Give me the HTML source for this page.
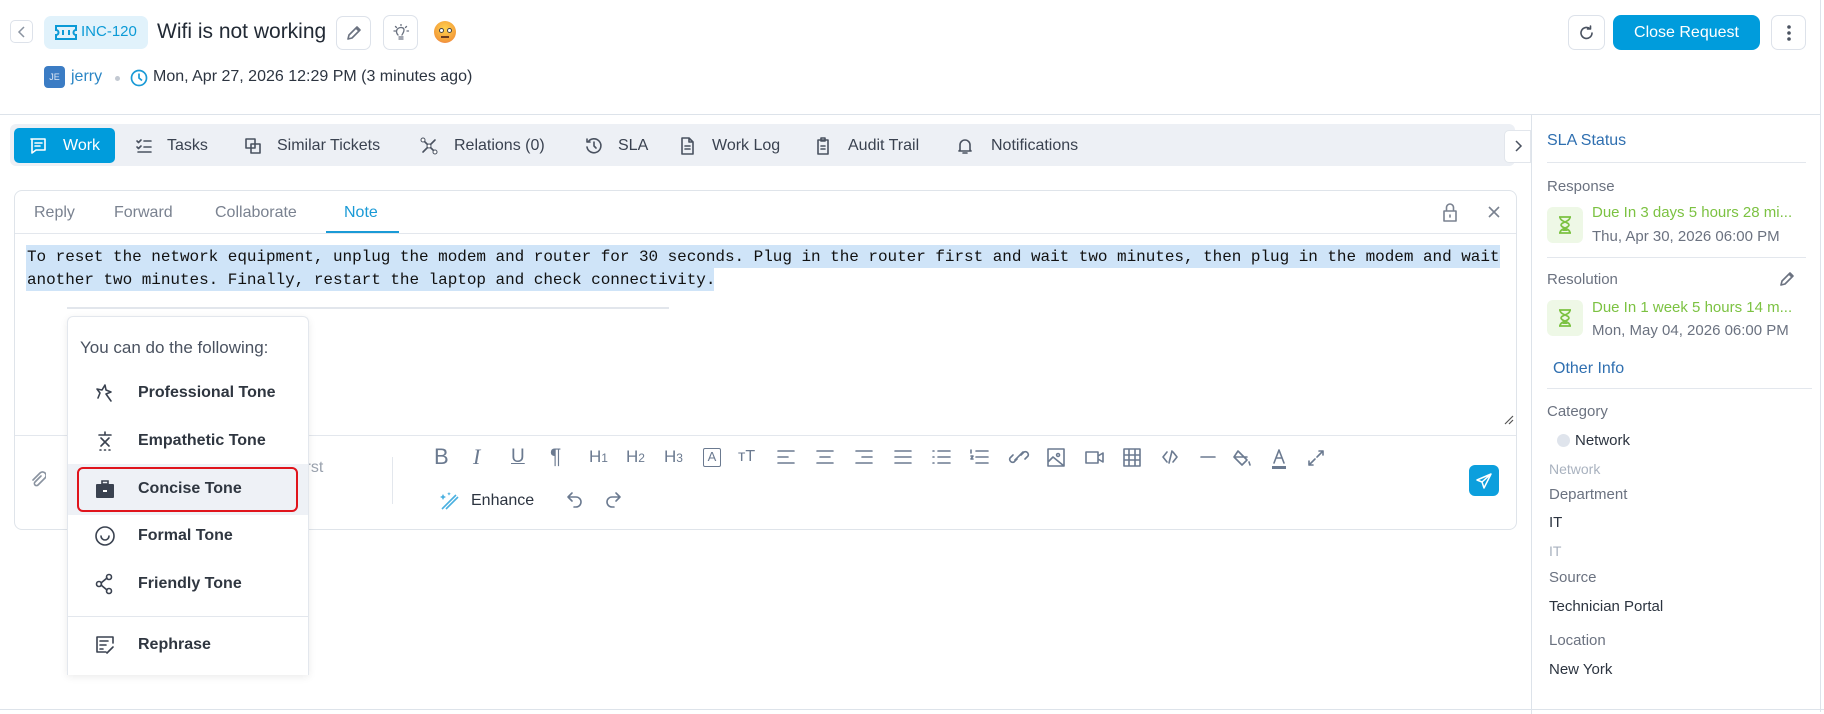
<!DOCTYPE html>
<html><head><meta charset="utf-8"><style>
*{margin:0;padding:0;box-sizing:border-box}
body{width:1824px;height:712px;position:relative;background:#fff;font-family:"Liberation Sans",sans-serif;color:#2c3440;overflow:hidden}
.a{position:absolute;white-space:nowrap}
.btn{position:absolute;border:1px solid #dde2ea;border-radius:7px;background:#fff;display:flex;align-items:center;justify-content:center}
.tab{position:absolute;top:136px;font-size:16px;color:#3a4250;display:flex;align-items:center;gap:10px}
.ic{stroke:#4a5260;fill:none;stroke-width:1.6;stroke-linecap:round;stroke-linejoin:round}
.tb{position:absolute;top:446px;font-size:19px;color:#6b7a90;line-height:22px}
.tbi{stroke:#6b7a90;fill:none;stroke-width:1.6;stroke-linecap:round;stroke-linejoin:round}
.mi{position:absolute;left:68px;width:240px;height:46px;display:flex;align-items:center;font-size:16px;font-weight:bold;color:#2f3640}
.mi svg{position:absolute;left:26px}
.mi span{position:absolute;left:70px}
.sl{font-size:15px;color:#6b7280}
.sv{font-size:15px;color:#2c3440}
</style></head><body>
<!-- header -->
<div class="btn" style="left:10px;top:20px;width:23px;height:23px;border-radius:5px"><svg width="10" height="12"><path d="M7 1L2 6l5 5" stroke="#8a93a0" stroke-width="1.5" fill="none"/></svg></div>
<div class="a" style="left:44px;top:16px;width:104px;height:33px;background:#e1f2fb;border-radius:7px"></div>
<svg class="a" style="left:55px;top:25px" width="22" height="15"><path d="M1 1h20v4a2.5 2.5 0 0 0 0 5v4H1v-4a2.5 2.5 0 0 0 0-5z" fill="none" stroke="#0b9ad6" stroke-width="2"/><path d="M8 5v5M14 5v5" stroke="#0b9ad6" stroke-width="2"/></svg>
<div class="a" style="left:81px;top:23px;font-size:15px;color:#0b9ad6">INC-120</div>
<div class="a" style="left:157px;top:20px;font-size:21px;color:#222a35">Wifi is not working</div>
<div class="btn" style="left:336px;top:16px;width:35px;height:34px"><svg width="18" height="18"><path class="ic" style="stroke:#6b7280" d="M3 15l1-4 8-8 3 3-8 8z M11 4l3 3"/></svg></div>
<div class="btn" style="left:383px;top:15px;width:35px;height:35px"><svg width="18" height="18"><path class="ic" style="stroke:#6b7280;stroke-width:1.3" d="M7 13h4M7 15h4M6 11c-2-2-2-5 0-6.5s6-1.5 6 1.5c0 2-1 3-2 5M9 0v1.5M2 7h1.5M15 7h1.5M3.5 2.5l1 1M14.5 2.5l-1 1"/></svg></div>
<div class="a" style="left:434px;top:21px;width:22px;height:22px;border-radius:50%;background:radial-gradient(circle at 50% 35%,#ffd24d,#f39a3a 70%,#ec6b6b)"></div>
<div class="a" style="left:439px;top:28px;width:5px;height:5px;background:#fff;border-radius:50%;border:1px solid #444"></div>
<div class="a" style="left:447px;top:28px;width:5px;height:5px;background:#fff;border-radius:50%;border:1px solid #444"></div>
<div class="a" style="left:441px;top:36px;width:8px;height:1.5px;background:#6a3b1e"></div>
<div class="a" style="left:44px;top:66px;width:21px;height:22px;background:#3b7cc4;border-radius:4px;color:#dfe9f6;font-size:9px;text-align:center;line-height:22px">JE</div>
<div class="a" style="left:71px;top:68px;font-size:16px;color:#2b86c5">jerry</div>
<div class="a" style="left:115px;top:76px;width:5px;height:5px;border-radius:50%;background:#c3c9d2"></div>
<svg class="a" style="left:130px;top:69px" width="18" height="18"><circle cx="9" cy="9" r="7.5" fill="none" stroke="#1a9ad6" stroke-width="1.7"/><path d="M9 4.5V9l3 2.5" fill="none" stroke="#1a9ad6" stroke-width="1.7"/></svg>
<div class="a" style="left:153px;top:68px;font-size:16px;color:#2c3440">Mon, Apr 27, 2026 12:29 PM (3 minutes ago)</div>
<div class="btn" style="left:1568px;top:15px;width:37px;height:35px"><svg width="18" height="18"><path class="ic" style="stroke:#4a5260" d="M14 9a5.5 5.5 0 1 1-2-4.3M12.5 2v3h-3"/></svg></div>
<div class="a" style="left:1613px;top:15px;width:147px;height:35px;background:#009cdc;border-radius:8px;color:#fff;font-size:16px;text-align:center;line-height:35px">Close Request</div>
<div class="btn" style="left:1771px;top:15px;width:35px;height:35px"><svg width="6" height="18"><circle cx="3" cy="3" r="1.8" fill="#4a5260"/><circle cx="3" cy="9" r="1.8" fill="#4a5260"/><circle cx="3" cy="15" r="1.8" fill="#4a5260"/></svg></div>
<div class="a" style="left:0;top:114px;width:1820px;height:1px;background:#dde3ea"></div>
<div class="a" style="left:1820px;top:0;width:1px;height:712px;background:#dde3ea"></div>
<div class="a" style="left:0;top:709px;width:1824px;height:1px;background:#dde3ea"></div>
<!-- tabs -->
<div class="a" style="left:10px;top:124px;width:1505px;height:42px;background:#edf0f5;border-radius:6px"></div>
<div class="a" style="left:14px;top:128px;width:101px;height:35px;background:#009cdc;border-radius:5px"></div>
<div class="tab" style="left:28px;color:#fff"><svg width="20" height="20"><path class="ic" style="stroke:#fff" d="M3 3h14v11H8l-4 3V3zM7 7h7M7 10h5"/></svg><span style="margin-left:5px">Work</span></div>
<div class="tab" style="left:134px"><svg width="20" height="20"><path class="ic" d="M3 5l1.5 1.5L7 4M3 11l1.5 1.5L7 10M10 5h7M10 11h7M4 16h13"/></svg><span style="margin-left:3px">Tasks</span></div>
<div class="tab" style="left:243px"><svg width="20" height="20"><path class="ic" d="M3 3h9v9H3zM8 8h9v9H8z"/></svg><span style="margin-left:4px">Similar Tickets</span></div>
<div class="tab" style="left:419px"><svg width="20" height="20"><path class="ic" d="M10 10L4 4M10 10l6-6M10 10l-6 6M10 10l6 6"/><circle cx="4" cy="4" r="2" fill="#fff" stroke="#4a5260"/><circle cx="16" cy="16" r="2" fill="#fff" stroke="#4a5260"/><circle cx="10" cy="10" r="2" fill="#fff" stroke="#4a5260"/></svg><span style="margin-left:5px">Relations (0)</span></div>
<div class="tab" style="left:584px"><svg width="20" height="20"><path class="ic" d="M4 6a7 7 0 1 1-1 5M3 3v3h3M10 6v4l2 2"/></svg><span style="margin-left:4px">SLA</span></div>
<div class="tab" style="left:677px"><svg width="20" height="20"><path class="ic" d="M5 2h7l4 4v12H5zM12 2v4h4M8 10h5M8 13h5"/></svg><span style="margin-left:5px">Work Log</span></div>
<div class="tab" style="left:813px"><svg width="20" height="20"><path class="ic" d="M5 4h10v14H5zM8 2h4v3H8zM8 10h4M8 13h4"/></svg><span style="margin-left:5px">Audit Trail</span></div>
<div class="tab" style="left:955px"><svg width="20" height="20"><path class="ic" d="M5 14V9a5 5 0 0 1 10 0v5l1 1H4zM8 17h4"/></svg><span style="margin-left:6px">Notifications</span></div>
<div class="a" style="left:1504px;top:130px;width:27px;height:33px;background:#fff;border:1px solid #e2e6ec;border-radius:5px 0 0 5px"></div>
<svg class="a" style="left:1513px;top:140px" width="10" height="12"><path d="M3 1l5 5-5 5" stroke="#4a5260" stroke-width="1.5" fill="none"/></svg>
<div class="a" style="left:1531px;top:114px;width:1px;height:600px;background:#dde3ea"></div>
<!-- editor card -->
<div class="a" style="left:14px;top:190px;width:1503px;height:340px;border:1px solid #dfe4ea;border-radius:8px"></div>
<div class="a" style="left:15px;top:233px;width:1501px;height:1px;background:#e3e7ed"></div>
<div class="a" style="left:34px;top:204px;font-size:16px;color:#7a8290">Reply</div>
<div class="a" style="left:114px;top:204px;font-size:16px;color:#7a8290">Forward</div>
<div class="a" style="left:215px;top:204px;font-size:16px;color:#7a8290">Collaborate</div>
<div class="a" style="left:344px;top:204px;font-size:16px;color:#1a9ad6">Note</div>
<div class="a" style="left:326px;top:231px;width:73px;height:2px;background:#1a9ad6"></div>
<svg class="a" style="left:1440px;top:201px" width="20" height="22"><path class="ic" style="stroke:#7a8290" d="M4 10h12v10H4zM6.5 10V6.5a3.5 3.5 0 0 1 7 0V10M10 14v2"/></svg>
<svg class="a" style="left:1487px;top:205px" width="14" height="14"><path d="M2 2l10 10M12 2L2 12" stroke="#7a8290" stroke-width="1.6"/></svg>
<div class="a" style="left:26px;top:245px;width:1474px;height:23px;background:#cfe4f8"></div>
<div class="a" style="left:26px;top:268px;width:688px;height:23px;background:#cfe4f8"></div>
<div class="a" style="left:27px;top:246px;font-family:'Liberation Mono',monospace;font-size:16px;letter-spacing:-0.04px;line-height:23px;color:#111">To reset the network equipment, unplug the modem and router for 30 seconds. Plug in the router first and wait two minutes, then plug in the modem and wait<br>another two minutes. Finally, restart the laptop and check connectivity.</div>
<div class="a" style="left:67px;top:307px;width:602px;height:2px;background:#e2e6ec"></div>
<svg class="a" style="left:1502px;top:413px" width="12" height="12"><path d="M11 3L3 11M11 7L7 11" stroke="#555" stroke-width="1.2"/></svg>
<div class="a" style="left:15px;top:435px;width:1501px;height:1px;background:#e3e7ed"></div>
<svg class="a" style="left:30px;top:470px" width="16" height="18"><path class="tbi" style="stroke:#8a93a0" d="M11 6l-6 6a2 2 0 0 0 3 3l7-7a3.5 3.5 0 0 0-5-5L3 10"/></svg>
<div class="a" style="left:302px;top:459px;font-size:16px;color:#9aa2ae">irst</div>
<div class="a" style="left:392px;top:457px;width:1px;height:47px;background:#e3e7ed"></div>
<!-- toolbar -->
<div class="tb" style="left:434px;font-size:22px">B</div>
<div class="tb" style="left:473px;font-style:italic;font-family:'Liberation Serif',serif;font-size:22px">I</div>
<div class="tb" style="left:511px;text-decoration:underline">U</div>
<div class="tb" style="left:550px;font-size:21px">¶</div>
<div class="tb" style="left:589px;font-size:17px">H<small style="font-size:12px">1</small></div>
<div class="tb" style="left:626px;font-size:17px">H<small style="font-size:12px">2</small></div>
<div class="tb" style="left:664px;font-size:17px">H<small style="font-size:12px">3</small></div>
<div class="a" style="left:703px;top:448px;width:18px;height:19px;border:1.6px solid #6b7a90;border-radius:2px;font-size:13px;color:#6b7a90;text-align:center;line-height:16px">A</div>
<div class="tb" style="left:738px;font-size:16px">ᴛT</div>
<svg class="a" style="left:776px;top:448px;overflow:visible" width="600" height="20">
<g class="tbi"><path d="M2 3h16M2 9h10M2 15h16"/><path d="M41 3h16M44 9h10M41 15h16"/><path d="M80 3h16M86 9h10M80 15h16"/><path d="M119 3h16M119 9h16M119 15h16"/>
<path d="M162 3h12M162 9h12M162 15h12M157 3h1M157 9h1M157 15h1"/><path d="M200 3h12M200 9h12M200 15h12M195 2v3M195 8h2l-2 3h2"/>
<path d="M241 11l-3 3a3 3 0 0 1-4-4l3-3M245 7l3-3a3 3 0 0 1 4 4l-3 3M239 12l8-8"/>
<path d="M272 1h16v17h-16zM272 14l5-5 11 9M282 5.5a1.5 1.5 0 1 0 .1 0"/>
<path d="M310 4h12v11h-12zM322 8l5-3v9l-5-3"/>
<path d="M348 1h16v17h-16zM348 7h16M348 12h16M353 1v17M359 1v17"/>
<path d="M391 4l-4 5 4 5M397 4l4 5-4 5M396 3l-3 12"/>
<path d="M425 9h14"/>
<path d="M462 3l9 9-5 5-8-8zM459 9h12M473 14l1 3"/>
<path d="M498 15l5-13 5 13M500 10h6"/>
<path d="M533 17l6-6M533 17v-4M533 17h4M547 3l-6 6M547 3v4M547 3h-4"/></g>
<rect x="496" y="18" width="14" height="3" fill="#6b7a90"/></svg>
<svg class="a" style="left:438px;top:490px" width="22" height="22"><path d="M4 19L18 5M8 19L20 7" stroke="#4ab0e0" stroke-width="1.6" fill="none"/><path d="M5 4l1 2 2 1-2 1-1 2-1-2-2-1 2-1zM11 2l.6 1.2 1.2.6-1.2.6L11 5.6l-.6-1.2-1.2-.6 1.2-.6z" fill="#4ab0e0"/></svg>
<div class="a" style="left:471px;top:492px;font-size:16px;color:#2c3440">Enhance</div>
<svg class="a" style="left:565px;top:490px" width="60" height="22"><path class="tbi" d="M7 3L3 7l4 4M3 7h8a5 5 0 0 1 0 10H9M51 3l4 4-4 4M55 7h-8a5 5 0 0 0 0 10h2"/></svg>
<div class="a" style="left:1469px;top:465px;width:30px;height:31px;background:#0c9fdd;border-radius:6px"></div>
<svg class="a" style="left:1475px;top:472px" width="18" height="18"><path d="M16 2L2 8l5 2 2 6zM16 2L7 10" stroke="#fff" stroke-width="1.5" fill="none" stroke-linejoin="round"/></svg>
<!-- dropdown -->
<div class="a" style="left:67px;top:316px;width:242px;height:359px;background:#fff;border:1px solid #e3e7ed;border-bottom:none;border-radius:6px 6px 0 0;box-shadow:0 2px 8px rgba(0,0,0,.08)"></div>
<div class="a" style="left:80px;top:338px;font-size:17px;color:#4a5260">You can do the following:</div>
<div class="mi" style="top:370px"><svg width="22" height="22"><path class="ic" style="stroke:#3a4250" d="M4 16l2-5-3-4 5 1 3-5 1 5 5 2-5 2M12 12l5 7"/></svg><span>Professional Tone</span></div>
<div class="mi" style="top:418px"><svg width="22" height="22"><path class="ic" style="stroke:#3a4250" d="M11 2v3M5 5h12M7 8l8 8M15 8l-8 8M6 20h1M10.5 20h1M15 20h1"/></svg><span>Empathetic Tone</span></div>
<div class="a" style="left:68px;top:464px;width:240px;height:51px;background:#eef1f6"></div>
<div class="a" style="left:77px;top:467px;width:221px;height:45px;border:2.5px solid #e0141c;border-radius:6px"></div>
<div class="mi" style="top:466px"><svg width="22" height="22"><path d="M8 3h6v3H8z" fill="none" stroke="#3a4250" stroke-width="1.6"/><rect x="2" y="6" width="18" height="14" rx="1" fill="#3a4250"/><rect x="9" y="12" width="4" height="2" fill="#fff"/></svg><span>Concise Tone</span></div>
<div class="mi" style="top:513px"><svg width="22" height="22"><circle cx="11" cy="11" r="9" class="ic" style="stroke:#3a4250"/><path class="ic" style="stroke:#3a4250" d="M7 11a4 4 0 0 0 8 0"/></svg><span>Formal Tone</span></div>
<div class="mi" style="top:561px"><svg width="22" height="22"><circle cx="5" cy="11" r="2.5" class="ic" style="stroke:#3a4250"/><circle cx="15" cy="4" r="2.5" class="ic" style="stroke:#3a4250"/><circle cx="15" cy="18" r="2.5" class="ic" style="stroke:#3a4250"/><path class="ic" style="stroke:#3a4250" d="M7 10l6-5M7 12l6 5"/></svg><span>Friendly Tone</span></div>
<div class="a" style="left:68px;top:616px;width:240px;height:1px;background:#e3e7ed"></div>
<div class="mi" style="top:622px"><svg width="22" height="22"><path class="ic" style="stroke:#3a4250" d="M12 18H3V3h16v6M6 7h8M6 11h6M6 15h3M13 19l6-6"/></svg><span>Rephrase</span></div>
<!-- sidebar -->
<div class="a" style="left:1547px;top:132px;font-size:16px;color:#2f6fb0">SLA Status</div>
<div class="a" style="left:1547px;top:162px;width:259px;height:1px;background:#e3e7ed"></div>
<div class="a sl" style="left:1547px;top:178px">Response</div>
<div class="a" style="left:1547px;top:207px;width:36px;height:36px;background:#eef8e6;border-radius:6px"></div>
<svg class="a" style="left:1557px;top:215px" width="16" height="20"><path d="M2 2h12M2 18h12M3 2c0 5 9 5 9 8s-9 3-9 8M13 2c0 5-9 5-9 8s9 3 9 8" stroke="#7cc242" stroke-width="1.7" fill="none"/><path d="M5 16l3-3 3 3z" fill="#7cc242"/></svg>
<div class="a" style="left:1592px;top:204px;font-size:15px;color:#7cc242">Due In 3 days 5 hours 28 mi...</div>
<div class="a sl" style="left:1592px;top:228px">Thu, Apr 30, 2026 06:00 PM</div>
<div class="a" style="left:1547px;top:257px;width:259px;height:1px;background:#e3e7ed"></div>
<div class="a sl" style="left:1547px;top:271px">Resolution</div>
<svg class="a" style="left:1778px;top:270px" width="18" height="18"><path class="ic" style="stroke:#6b7280" d="M3 15l1-4 8-8 3 3-8 8z M11 4l3 3"/></svg>
<div class="a" style="left:1547px;top:300px;width:36px;height:36px;background:#eef8e6;border-radius:6px"></div>
<svg class="a" style="left:1557px;top:308px" width="16" height="20"><path d="M2 2h12M2 18h12M3 2c0 5 9 5 9 8s-9 3-9 8M13 2c0 5-9 5-9 8s9 3 9 8" stroke="#7cc242" stroke-width="1.7" fill="none"/><path d="M5 16l3-3 3 3z" fill="#7cc242"/></svg>
<div class="a" style="left:1592px;top:299px;font-size:15px;color:#7cc242">Due In 1 week 5 hours 14 m...</div>
<div class="a sl" style="left:1592px;top:322px">Mon, May 04, 2026 06:00 PM</div>
<div class="a" style="left:1553px;top:360px;font-size:16px;color:#2f6fb0">Other Info</div>
<div class="a" style="left:1547px;top:388px;width:265px;height:1px;background:#e3e7ed"></div>
<div class="a sl" style="left:1547px;top:403px">Category</div>
<div class="a" style="left:1557px;top:434px;width:13px;height:13px;border-radius:50%;background:#dfe4ec"></div>
<div class="a sv" style="left:1575px;top:432px">Network</div>
<div class="a" style="left:1549px;top:461px;font-size:14px;color:#a9b2bf">Network</div>
<div class="a sl" style="left:1549px;top:486px">Department</div>
<div class="a sv" style="left:1549px;top:514px">IT</div>
<div class="a" style="left:1549px;top:543px;font-size:14px;color:#a9b2bf">IT</div>
<div class="a sl" style="left:1549px;top:569px">Source</div>
<div class="a sv" style="left:1549px;top:598px">Technician Portal</div>
<div class="a sl" style="left:1549px;top:632px">Location</div>
<div class="a sv" style="left:1549px;top:661px">New York</div>
</body></html>
